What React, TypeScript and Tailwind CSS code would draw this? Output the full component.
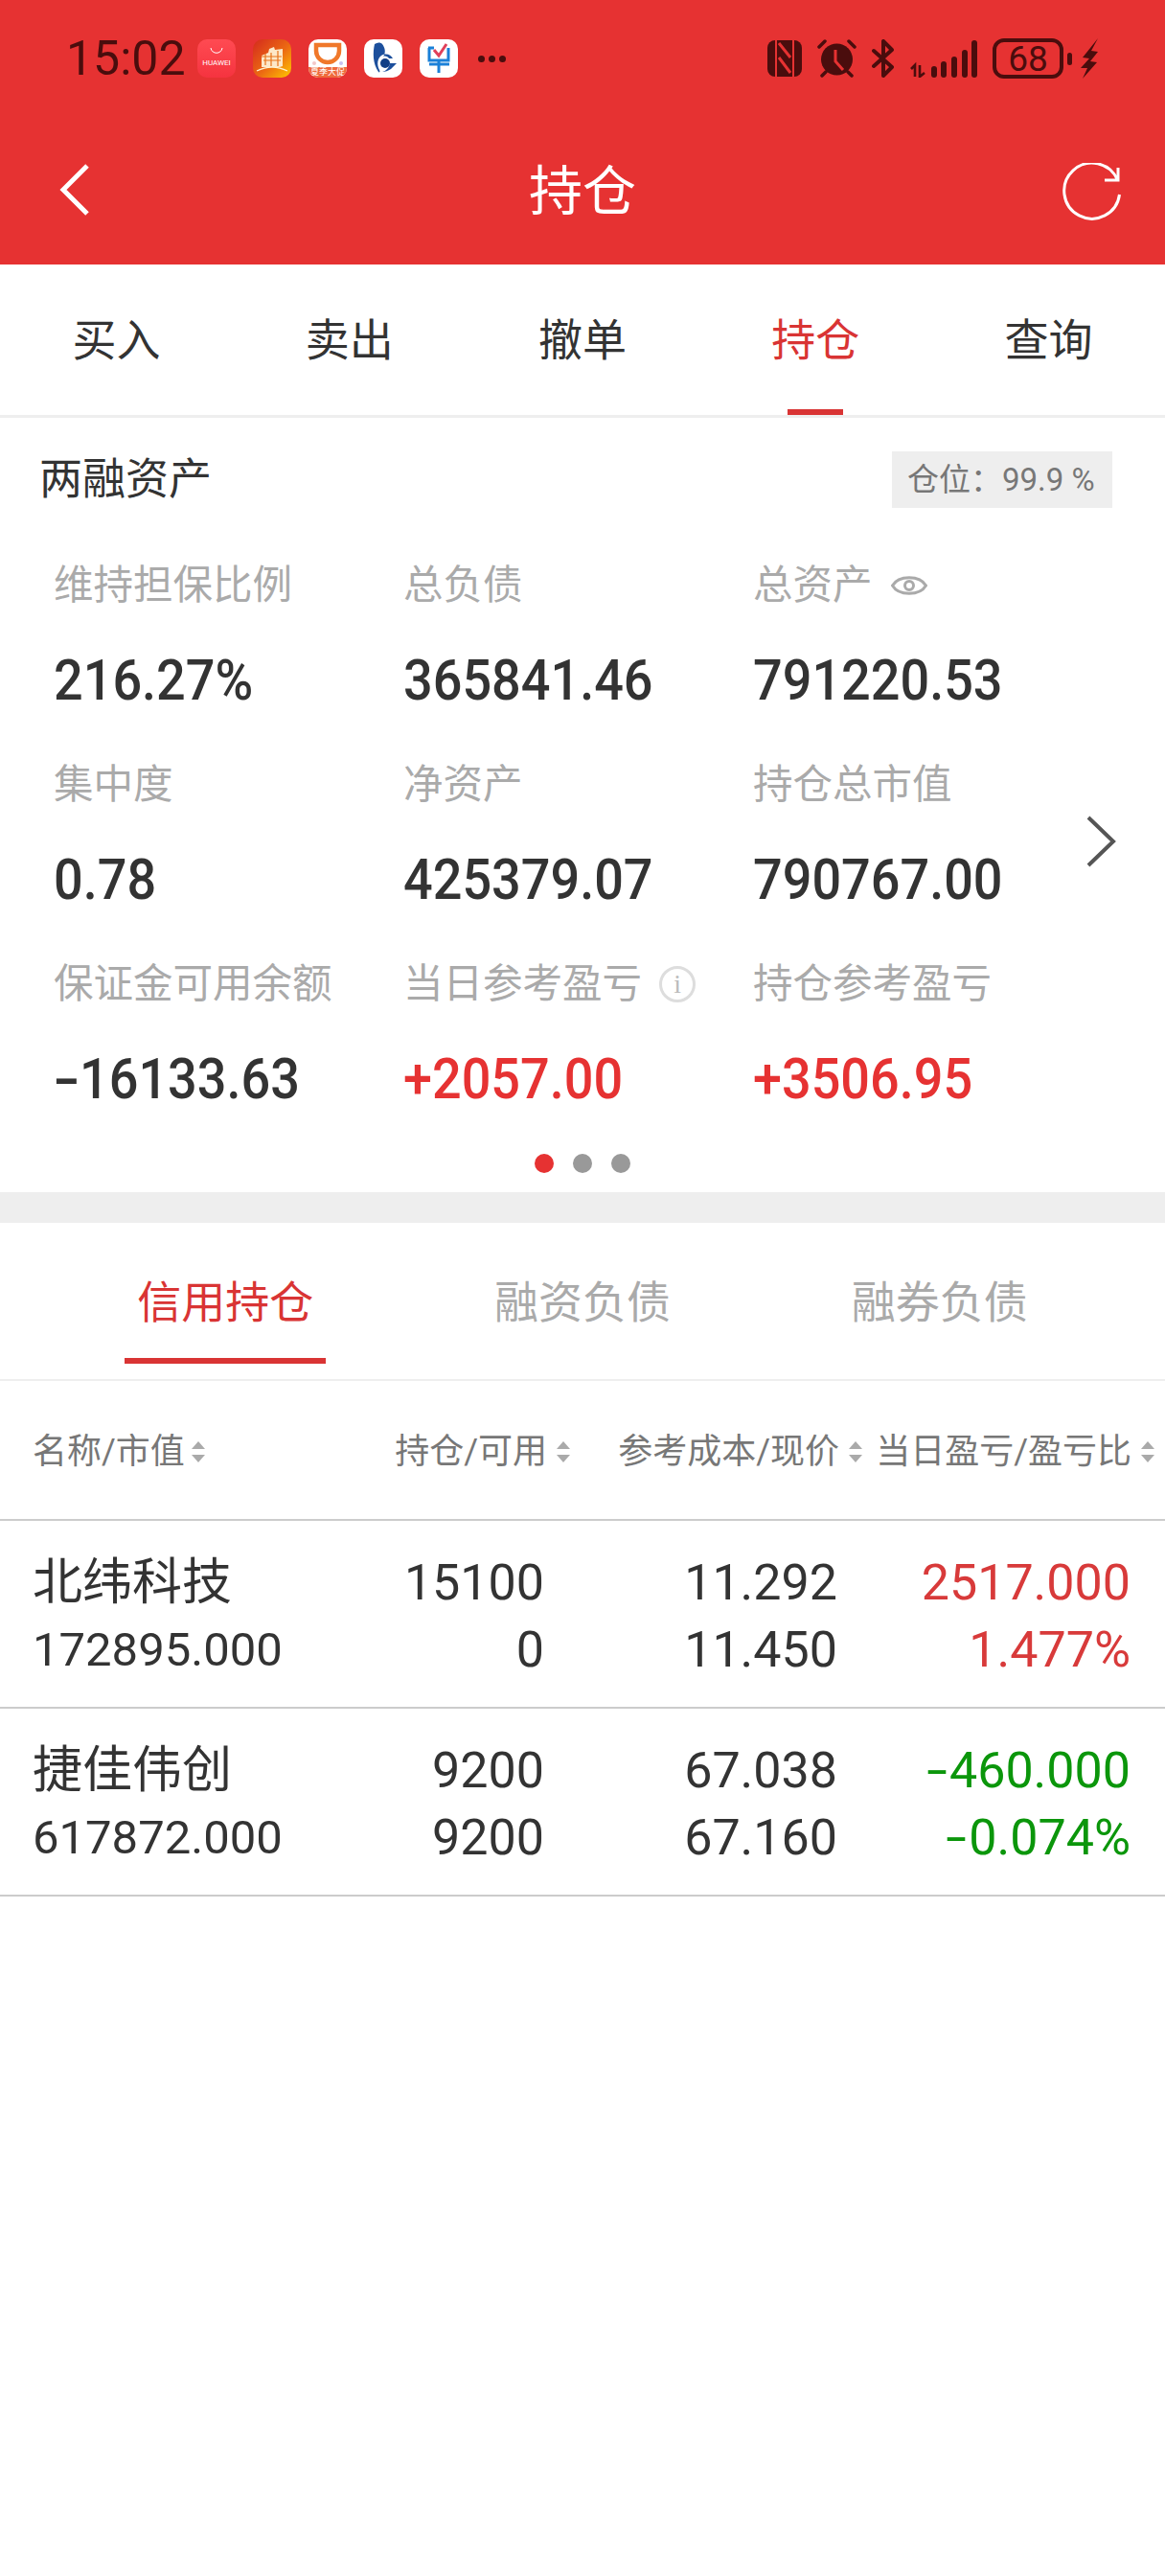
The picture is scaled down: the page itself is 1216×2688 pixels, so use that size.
import { ReactNode } from 'react'

const DARK = '#4a0d0d'

function HuaweiIcon() {
  return (
    <div className="w-10 h-10 rounded-[10px] bg-gradient-to-b from-[#ff4a52] to-[#f5333f] flex flex-col items-center">
      <svg width="14" height="8" viewBox="0 0 14 8" className="mt-2">
        <path d="M1 1c1 7 11 7 12 0" fill="none" stroke="#fff" strokeWidth="1" />
      </svg>
      <span className="text-[8px] leading-[10px] mt-1 text-white font-['Roboto',sans-serif]">HUAWEI</span>
    </div>
  )
}

function TowerIcon() {
  return (
    <svg width="40" height="40" viewBox="0 0 40 40">
      <defs>
        <linearGradient id="tower" x1="0" y1="0" x2="1" y2="1">
          <stop offset="0" stopColor="#d42a1e" />
          <stop offset="0.55" stopColor="#ec6a12" />
          <stop offset="1" stopColor="#ffc800" />
        </linearGradient>
      </defs>
      <rect width="40" height="40" rx="10" fill="url(#tower)" />
      <path d="M9 17l7-3 1-4 5-2 1 3 8-1v18l-3 1H9z" fill="#fde8c8" />
      <path d="M9 18h21M11 22h18M13 15v12M19 14v14M26 12v16" stroke="#e8741a" strokeWidth="1.2" fill="none" />
      <path d="M4 33c10-5 22-5 32 0" stroke="#fff3d0" strokeWidth="1.3" fill="none" />
    </svg>
  )
}

function DidiIcon() {
  return (
    <div className="w-10 h-10 rounded-[10px] bg-white overflow-hidden flex flex-col">
      <svg width="40" height="29" viewBox="0 0 40 29" className="shrink-0">
        <path d="M8 6h24v6a12 12 0 0 1-24 0z" fill="none" stroke="#f0782a" strokeWidth="4.5" />
        <circle cx="6" cy="25" r="2" fill="#f4c8c8" />
        <circle cx="34" cy="25" r="2" fill="#c8c0f0" />
      </svg>
      <span className="h-[11px] bg-[#ef6a3c] text-white text-[9px] leading-[11px] text-center whitespace-nowrap">夏季大促</span>
    </div>
  )
}

function BankIcon() {
  return (
    <svg width="40" height="40" viewBox="0 0 40 40">
      <rect width="40" height="40" rx="10" fill="#fff" />
      <path d="M11 5c-2 9-2 20 4 29 1 1 2 0 1-2-3-6-2-12 2-15 5-3 10-1 12 3h-4c-1-2-4-3-6-2 3-4 2-9-1-13-2-2-5-2-8 0z" fill="#1c4f9c" />
      <circle cx="22" cy="25" r="5" fill="#123f86" />
      <path d="M27 25h7l-6 6c-3 2-6 3-9 3 4-1 7-4 8-9z" fill="#1c4f9c" />
    </svg>
  )
}

function CheckIcon() {
  return (
    <svg width="40" height="40" viewBox="0 0 40 40">
      <rect width="40" height="40" rx="10" fill="#fff" />
      <path d="M10 9v13h20V9M10 26h21M20 22v13M9 9h6" fill="none" stroke="#1a80d8" strokeWidth="3" />
      <path d="M15 11l5 6 8-12" fill="none" stroke="#e0405a" strokeWidth="3" />
    </svg>
  )
}

function NfcIcon() {
  return (
    <svg width="36" height="38" viewBox="0 0 36 38">
      <rect width="36" height="38" rx="8" fill={DARK} />
      <path d="M9 0v38M27 0v38" stroke="#e63232" strokeWidth="2" />
      <path d="M12 3l12 15M12 18l12 16" stroke="#e63232" strokeWidth="3" />
    </svg>
  )
}

function AlarmIcon() {
  return (
    <svg width="41" height="40" viewBox="0 0 41 40">
      <circle cx="20.5" cy="21" r="16.5" fill={DARK} />
      <path d="M19 11v12l8 9" fill="none" stroke="#e63232" strokeWidth="3" />
      <path d="M2 8l6-6M39 8l-6-6M9 34l-4 4M32 34l4 4" stroke={DARK} strokeWidth="3.5" strokeLinecap="round" />
    </svg>
  )
}

function BluetoothIcon() {
  return (
    <svg width="24" height="40" viewBox="0 0 24 40">
      <path d="M2 28L21 11 12 2v36l9-9L2 12" fill="none" stroke={DARK} strokeWidth="4" strokeLinejoin="round" strokeLinecap="round" />
    </svg>
  )
}

function SignalIcon() {
  return (
    <svg width="70" height="40" viewBox="0 0 70 40">
      <path d="M1 31l4-4v12M10 27v12l5-4" fill="none" stroke={DARK} strokeWidth="2.6" />
      {[[22, 12], [32, 17], [43, 22], [54, 29], [64, 39]].map(([x, h]) => (
        <rect key={x} x={x} y={40 - h} width="6" height={h} rx="3" fill={DARK} />
      ))}
    </svg>
  )
}

function BoltIcon() {
  return (
    <svg width="20" height="42" viewBox="0 0 20 42">
      <path d="M19 0L3 20l7 1-9 10h7L3 42l15-17-7-1 8-10-7-1z" fill={DARK} />
    </svg>
  )
}

function StatusBar() {
  return (
    <div className="flex items-center h-10 pl-[69px] pr-[69px]">
      <span className="text-[50px] leading-10 text-[#4a0d0d] w-[137px]">15:02</span>
      <div className="flex gap-[18px]">
        <HuaweiIcon />
        <TowerIcon />
        <DidiIcon />
        <BankIcon />
        <CheckIcon />
      </div>
      <div className="flex gap-[4px] ml-[21px]">
        <span className="w-[7px] h-[7px] rounded-full bg-[#4a0d0d]" />
        <span className="w-[7px] h-[7px] rounded-full bg-[#4a0d0d]" />
        <span className="w-[7px] h-[7px] rounded-full bg-[#4a0d0d]" />
      </div>
      <div className="ml-auto flex items-center gap-4">
        <NfcIcon />
        <AlarmIcon />
        <BluetoothIcon />
        <SignalIcon />
        <div className="flex items-center gap-1">
          <div className="w-[74px] h-[42px] rounded-[12px] border-[4px] border-[#4a0d0d] flex items-center justify-center text-[37px] leading-none text-[#4a0d0d]">
            68
          </div>
          <span className="w-[5px] h-[13px] rounded-full bg-[#4a0d0d]" />
        </div>
        <div className="-ml-2">
          <BoltIcon />
        </div>
      </div>
    </div>
  )
}

function Header() {
  return (
    <div className="h-[276px] pt-[41px] bg-[#e63232]">
      <StatusBar />
      <div className="grid grid-cols-[1fr_auto_1fr] items-center mt-[89px] px-[47px] h-[62px]">
        <svg width="32" height="54" viewBox="0 0 32 54" className="ml-[15px] -mt-[6px]">
          <path d="M29 2L4 27l25 25" fill="none" stroke="#fff" strokeWidth="5" />
        </svg>
        <span className="text-[56px] leading-[62px] text-white -mt-[2px]">持仓</span>
        <svg width="62" height="62" viewBox="0 0 62 62" className="justify-self-end -mr-[1px]">
          <path d="M60.5 33A29 29 0 1 1 58.5 18M45 18H59V5" fill="none" stroke="#fff" strokeWidth="3" />
        </svg>
      </div>
    </div>
  )
}

const tabs = ['买入', '卖出', '撤单', '持仓', '查询']

function MainTabs() {
  return (
    <div className="grid grid-cols-5 pt-[53px] border-b-[3px] border-[#eeeeee]">
      {tabs.map((t) => (
        <div key={t} className="flex flex-col items-center">
          <span className={`text-[46px] leading-[52px] ${t === '持仓' ? 'text-[#d93434]' : 'text-[#333333]'}`}>{t}</span>
          <span className={`w-[58px] h-[6px] mt-[46px] ${t === '持仓' ? 'bg-[#d93434]' : ''}`} />
        </div>
      ))}
    </div>
  )
}

function EyeIcon() {
  return (
    <svg width="38" height="26" viewBox="0 0 38 26" className="ml-[19px]">
      <path d="M1.5 13C8 2 30 2 36.5 13 30 24 8 24 1.5 13z" fill="none" stroke="#aaaaaa" strokeWidth="3" />
      <circle cx="19" cy="13" r="4.5" fill="none" stroke="#aaaaaa" strokeWidth="3" />
    </svg>
  )
}

function InfoIcon() {
  return (
    <div className="ml-[18px] w-[38px] h-[38px] rounded-full border-[3px] border-[#dddddd] flex items-center justify-center text-[28px] leading-none text-[#bbbbbb] font-['Liberation_Serif',serif]">
      i
    </div>
  )
}

// the reference font has a much wider minus than Roboto's hyphen
function Signed({ value }: { value: string }) {
  if (!value.startsWith('-')) return <>{value}</>
  return (
    <>
      <span className="inline-block w-[0.5em] text-center scale-x-[1.5]">-</span>
      {value.slice(1)}
    </>
  )
}

const stats: { label: string; value: string; red?: boolean; icon?: ReactNode }[] = [
  { label: '维持担保比例', value: '216.27%' },
  { label: '总负债', value: '365841.46' },
  { label: '总资产', value: '791220.53', icon: <EyeIcon /> },
  { label: '集中度', value: '0.78' },
  { label: '净资产', value: '425379.07' },
  { label: '持仓总市值', value: '790767.00' },
  { label: '保证金可用余额', value: '-16133.63' },
  { label: '当日参考盈亏', value: '+2057.00', red: true, icon: <InfoIcon /> },
  { label: '持仓参考盈亏', value: '+3506.95', red: true },
]

function Assets() {
  return (
    <div className="pt-[35px] pb-5">
      <div className="flex items-center justify-between pl-[41px] pr-[55px] h-[59px]">
        <span className="text-[45px] leading-[52px] text-[#333333]">两融资产</span>
        <div className="w-[230px] h-[59px] pl-4 bg-[#eeeeee] flex items-center text-[33px] text-[#777777] whitespace-pre">
          仓位：99.9 %
        </div>
      </div>
      <div className="relative mt-[51px]">
        <div className="grid grid-cols-[365px_365px_365px] gap-y-[49px] pl-[56px]">
          {stats.map((s) => (
            <div key={s.label}>
              <div className="flex items-center h-[60px] text-[41.5px] text-[#aaaaaa] whitespace-nowrap">
                {s.label}
                {s.icon}
              </div>
              <div className={`mt-[39px] h-[60px] leading-[60px] text-[54px] font-medium scale-y-[1.1] ${s.red ? 'text-[#e63232]' : 'text-[#333333]'}`}>
                <Signed value={s.value} />
              </div>
            </div>
          ))}
        </div>
        <svg width="34" height="54" viewBox="0 0 34 54" className="absolute right-[50px] top-[270px]">
          <path d="M4 2l26 25L4 52" fill="none" stroke="#555555" strokeWidth="4" />
        </svg>
      </div>
      <div className="flex justify-center gap-5 mt-[48px]">
        <span className="w-5 h-5 rounded-full bg-[#e63232]" />
        <span className="w-5 h-5 rounded-full bg-[#999999]" />
        <span className="w-5 h-5 rounded-full bg-[#999999]" />
      </div>
    </div>
  )
}

function SubTabs() {
  return (
    <div className="grid grid-cols-3 px-[49px] pt-[53px] pb-4 border-b-2 border-[#eeeeee]">
      <div className="flex flex-col items-center">
        <span className="text-[46px] leading-[60px] text-[#d93434]">信用持仓</span>
        <span className="w-[210px] h-[6px] mt-[28px] bg-[#d93434]" />
      </div>
      <span className="text-center text-[46px] leading-[60px] text-[#aaaaaa]">融资负债</span>
      <span className="text-center text-[46px] leading-[60px] text-[#aaaaaa]">融券负债</span>
    </div>
  )
}

function SortIcon() {
  return (
    <svg width="14" height="22" viewBox="0 0 14 22" className="shrink-0">
      <path d="M7 0l7 8H0zM7 22l7-8H0z" fill="#aaaaaa" />
    </svg>
  )
}

const COLS = 'grid grid-cols-[311px_250px_305px_305px] pl-[34px]'

const headers = ['名称/市值', '持仓/可用', '参考成本/现价', '当日盈亏/盈亏比']

const rows = [
  { name: '北纬科技', cap: '172895.000', hold: '15100', avail: '0', cost: '11.292', price: '11.450', pnl: '2517.000', pct: '1.477%', color: 'text-[#d83a3a]' },
  { name: '捷佳伟创', cap: '617872.000', hold: '9200', avail: '9200', cost: '67.038', price: '67.160', pnl: '-460.000', pct: '-0.074%', color: 'text-[#0b960b]' },
]

function Table() {
  return (
    <div>
      <div className={`${COLS} h-[146px] pt-[3px] items-center border-b-2 border-[#cccccc]`}>
        {headers.map((h, i) => (
          <div key={h} className={`flex items-center text-[36px] text-[#777777] whitespace-nowrap ${i === 0 ? 'gap-[7px]' : 'gap-[10px] justify-end'}`}>
            {h}
            <SortIcon />
          </div>
        ))}
      </div>
      {rows.map((r) => (
        <div key={r.name} className={`${COLS} pt-[30px] pb-[24px] border-b-2 border-[#cccccc] text-[52px] leading-[70px] text-[#333333]`}>
          <div>
            <div>{r.name}</div>
            <div className="text-[49px]">{r.cap}</div>
          </div>
          <div className="text-right pr-[27px]">
            <div>{r.hold}</div>
            <div>{r.avail}</div>
          </div>
          <div className="text-right pr-[26px]">
            <div>{r.cost}</div>
            <div>{r.price}</div>
          </div>
          <div className={`text-right pr-[25px] ${r.color}`}>
            <div><Signed value={r.pnl} /></div>
            <div><Signed value={r.pct} /></div>
          </div>
        </div>
      ))}
    </div>
  )
}

export default function App() {
  return (
    <div className="w-[1216px] min-h-[2688px] bg-white overflow-hidden font-['Roboto','Noto_Sans_CJK_SC',sans-serif]">
      <Header />
      <MainTabs />
      <Assets />
      <div className="h-8 bg-[#eeeeee]" />
      <SubTabs />
      <Table />
    </div>
  )
}
